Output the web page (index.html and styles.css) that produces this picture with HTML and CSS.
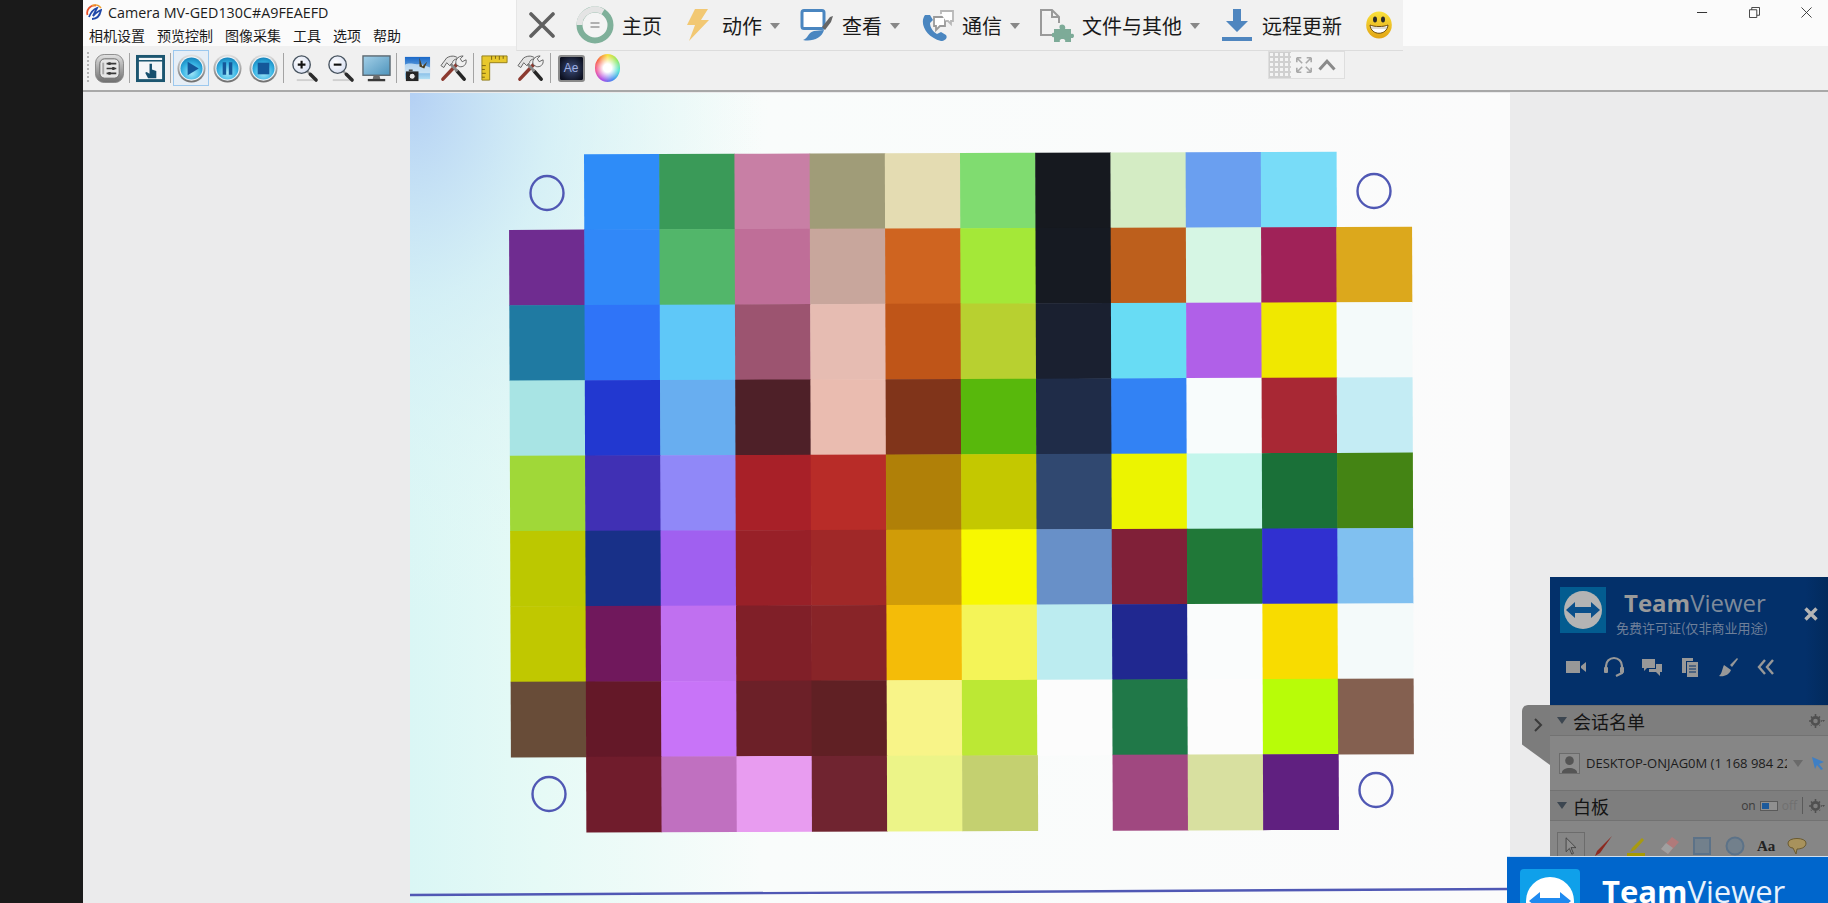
FILE: index.html
```html
<!DOCTYPE html>
<html lang="zh-CN">

<head>
    <meta charset="UTF-8">
    <title>Camera MV-GED130C#A9FEAEFD</title>
    <link rel="stylesheet" href="styles.css">
</head>

<body>
    <svg class="defs" width="0" height="0">
        <defs>
            <linearGradient id="metal" x1="0" y1="0" x2="0" y2="1">
                <stop offset="0" stop-color="#e2e2e2" />
                <stop offset="1" stop-color="#6e6e6e" />
            </linearGradient>
            <radialGradient id="aqua" cx="0.5" cy="0.7" r="0.7">
                <stop offset="0" stop-color="#a4e8f8" />
                <stop offset="0.6" stop-color="#38b4e4" />
                <stop offset="1" stop-color="#1484bc" />
            </radialGradient>
            <radialGradient id="lens" cx="0.4" cy="0.4" r="0.7">
                <stop offset="0" stop-color="#ffffff" />
                <stop offset="1" stop-color="#d4dcf0" />
            </radialGradient>
            <linearGradient id="screen" x1="0" y1="0" x2="1" y2="1">
                <stop offset="0" stop-color="#a4d0e8" />
                <stop offset="1" stop-color="#4e94bc" />
            </linearGradient>
            <linearGradient id="sky" x1="0" y1="0" x2="0" y2="1">
                <stop offset="0" stop-color="#1a68c8" />
                <stop offset="1" stop-color="#b4e0f4" />
            </linearGradient>
            <radialGradient id="ae-glow" cx="0.5" cy="0.5" r="0.6">
                <stop offset="0" stop-color="#3c4c78" />
                <stop offset="1" stop-color="#0c1020" />
            </radialGradient>
            <linearGradient id="smile-fill" x1="0" y1="0" x2="0" y2="1">
                <stop offset="0" stop-color="#fae23c" />
                <stop offset="1" stop-color="#e2a414" />
            </linearGradient>
            <symbol id="media-ring" viewBox="0 0 30 30">
                <circle cx="15" cy="15" r="14.5" fill="url(#metal)" />
                <circle cx="15" cy="15" r="12.6" fill="#eef4f8" />
                <circle cx="15" cy="15" r="11.4" fill="url(#aqua)" />
            </symbol>
            <symbol id="tools" viewBox="0 0 30 30">
                <path d="M4 26 L20 9" stroke="#8c3a30" stroke-width="3.6" stroke-linecap="round" />
                <path d="M26 26 L19 18" stroke="#262626" stroke-width="3.8" stroke-linecap="round" />
                <path d="M19 18 L10 8" stroke="#8a8a8a" stroke-width="3" />
                <path d="M2 12 L8 4 C13 1 18 2 20 5 C16 5 14 7 14 9 L11 12 L8 9 L5 14 Z" fill="#e4e4e4" stroke="#555" stroke-width="0.9" />
                <path d="M18 11 C16 7 19 2 25 2 L22 5 L24 8 L28 6 C29 11 25 14 21 13 Z" fill="#f0f0f0" stroke="#555" stroke-width="0.9" />
            </symbol>
            <symbol id="magnifier" viewBox="0 0 30 30">
                <path d="M7 27 H25" stroke="#d0d0d0" stroke-width="2" />
                <path d="M17 17 L22 22" stroke="#9a9a9a" stroke-width="2.4" />
                <path d="M21 21 L27 27" stroke="#2c2c2c" stroke-width="3.6" stroke-linecap="round" />
                <circle cx="12" cy="11" r="9" fill="url(#lens)" stroke="#46525e" stroke-width="1.4" />
            </symbol>
            <symbol id="gear-shape" viewBox="0 0 16 16">
                <circle cx="6.5" cy="8" r="3.6" fill="none" stroke="#505050" stroke-width="2.6" />
                <path d="M6.5 1 V15 M0 8 H13 M2 3.5 L11 12.5 M11 3.5 L2 12.5" stroke="#505050" stroke-width="1.6" stroke-dasharray="2 10" />
                <path d="M13 7 H16 L14.5 9 Z" fill="#505050" />
            </symbol>
        </defs>
    </svg>

    <div class="desk-strip"></div>

    <div class="app">
        <div class="title-area">
            <div class="title-row">
                <svg class="app-logo" viewBox="0 0 16 16">
                    <path d="M1.5 11 C0 6 4 1 10 1.5" fill="none" stroke="#e8502a" stroke-width="1.8" />
                    <path d="M6 1.5 C9 0.5 13 1 15 4" fill="none" stroke="#f0a030" stroke-width="1.4" />
                    <path d="M3 13 C5 8 8 5 11 4 L7 12 C9 10 12 7 15 6 C14 11 11 15 6 15" fill="none" stroke="#2048a8" stroke-width="1.8" />
                </svg>
                <span class="app-title">Camera MV-GED130C#A9FEAEFD</span>
                <div class="win-controls">
                    <svg viewBox="0 0 12 12"><path d="M0 6 H11" stroke="#222" /></svg>
                    <svg viewBox="0 0 12 12"><path d="M0.5 3 H8.5 V11.5 H0.5 Z M3 3 V0.5 H11.5 V9 H8.5" fill="none" stroke="#333" /></svg>
                    <svg viewBox="0 0 12 12"><path d="M0.5 0.5 L11.5 11.5 M11.5 0.5 L0.5 11.5" stroke="#333" /></svg>
                </div>
            </div>
            <div class="menu-row">
                <span>相机设置</span>
                <span>预览控制</span>
                <span>图像采集</span>
                <span>工具</span>
                <span>选项</span>
                <span>帮助</span>
            </div>
        </div>

        <div class="toolbar">
            <div class="grip"></div>
            <div class="tool">
                <svg viewBox="0 0 30 30">
                    <rect x="0.5" y="0.5" width="29" height="29" rx="9" fill="url(#metal)" stroke="#8a8a8a" />
                    <rect x="5" y="5" width="20" height="20" rx="5" fill="#e6e6e6" stroke="#6a6a6a" />
                    <path d="M8.5 9 V21" stroke="#a8a8a8" stroke-width="2" />
                    <path d="M12 10 H22 M12 15 H22 M12 20 H22" stroke="#3a3a3a" stroke-width="1.8" />
                    <path d="M15 8.5 V11.5 M19 13.5 V16.5 M15 18.5 V21.5" stroke="#3a3a3a" stroke-width="2.4" />
                </svg>
            </div>
            <div class="sep"></div>
            <div class="tool">
                <svg viewBox="0 0 30 30">
                    <rect x="1.5" y="2.5" width="27" height="25" fill="#f4f6f8" stroke="#1c5670" stroke-width="3" />
                    <path d="M2 7 H28" stroke="#1c5670" stroke-width="1.6" />
                    <path d="M14 10 H16.5 V16 L21 17.5 V25 H12.5 L9.5 19.5 L11 18.5 L14 20.5 Z" fill="#17506e" />
                </svg>
            </div>
            <div class="sep"></div>
            <div class="tool active">
                <svg viewBox="0 0 30 30">
                    <use href="#media-ring" />
                    <path d="M11 8 L22.5 15 L11 22 Z" fill="#14589a" />
                </svg>
            </div>
            <div class="tool">
                <svg viewBox="0 0 30 30">
                    <use href="#media-ring" />
                    <path d="M10 8.5 H13.6 V21.5 H10 Z M16.4 8.5 H20 V21.5 H16.4 Z" fill="#14589a" />
                </svg>
            </div>
            <div class="tool">
                <svg viewBox="0 0 30 30">
                    <use href="#media-ring" />
                    <rect x="9" y="9" width="12" height="12" fill="#14589a" />
                </svg>
            </div>
            <div class="sep"></div>
            <div class="tool">
                <svg viewBox="0 0 30 30">
                    <use href="#magnifier" />
                    <path d="M8 11 H16 M12 7 V15" stroke="#111" stroke-width="2.2" />
                </svg>
            </div>
            <div class="tool">
                <svg viewBox="0 0 30 30">
                    <use href="#magnifier" />
                    <path d="M8 11 H16" stroke="#111" stroke-width="2.2" />
                </svg>
            </div>
            <div class="tool">
                <svg viewBox="0 0 30 30">
                    <rect x="1" y="2" width="28" height="20" fill="url(#screen)" stroke="#5a666e" stroke-width="1.4" />
                    <path d="M12 22 H18 L19 26 H11 Z" fill="#6c6c6c" />
                    <path d="M6 27 H24" stroke="#3a3a3a" stroke-width="2.4" />
                </svg>
            </div>
            <div class="sep"></div>
            <div class="tool">
                <svg viewBox="0 0 30 30">
                    <rect x="2" y="3" width="26" height="23" fill="url(#sky)" />
                    <path d="M2 11 C8 8 12 12 18 10 L28 14 V20 H2 Z" fill="#e4f2fa" opacity="0.7" />
                    <path d="M17 4 L20 13 L25 8 L22 15 L17 13 Z" fill="#4a3c20" />
                    <rect x="3" y="18" width="13" height="10" fill="#262626" />
                    <rect x="6" y="16" width="4" height="2" fill="#444" />
                    <circle cx="9.5" cy="23" r="3.2" fill="#e8e8e8" stroke="#111" />
                </svg>
            </div>
            <div class="tool"><svg viewBox="0 0 30 30"><use href="#tools" /></svg></div>
            <div class="sep"></div>
            <div class="tool">
                <svg viewBox="0 0 30 30">
                    <path d="M2 2 H28 V9 H10 V27 H2 Z" fill="#e8c82c" stroke="#94801c" />
                    <path d="M12 2 V6 M16 2 V5 M20 2 V6 M24 2 V5 M2 12 H6 M2 16 H5 M2 20 H6 M2 24 H5" stroke="#7a6410" />
                </svg>
            </div>
            <div class="tool"><svg viewBox="0 0 30 30"><use href="#tools" /></svg></div>
            <div class="sep"></div>
            <div class="tool">
                <div class="ae-badge">
                    <svg viewBox="0 0 26 26"><rect width="26" height="26" fill="url(#ae-glow)" /></svg>
                    <span>Ae</span>
                </div>
            </div>
            <div class="tool">
                <div class="color-wheel"></div>
            </div>
        </div>

        <div class="canvas">
            <svg class="photo" viewBox="0 0 1100 811">
                <defs>
                    <linearGradient id="paper" x1="0" y1="0" x2="1" y2="0">
                        <stop offset="0" stop-color="#daf6f5" />
                        <stop offset="0.12" stop-color="#e6faf6" />
                        <stop offset="0.32" stop-color="#f9fcfb" />
                        <stop offset="1" stop-color="#fbfbfb" />
                    </linearGradient>
                    <radialGradient id="corner" gradientUnits="userSpaceOnUse" cx="0" cy="0" r="1" gradientTransform="scale(360 520)">
                        <stop offset="0" stop-color="#b4d0f4" />
                        <stop offset="0.4" stop-color="#d0ecf6" stop-opacity="0.7" />
                        <stop offset="1" stop-color="#e6faf6" stop-opacity="0" />
                    </radialGradient>
                </defs>
                <rect width="1100" height="811" fill="url(#paper)" />
                <rect width="1100" height="811" fill="url(#corner)" />

                <g transform="translate(1 -1) rotate(-0.2 550 405)">
                    <g class="row" transform="translate(0 61)">
                        <rect x="174.2" fill="#2e8cf8" /><rect x="249.4" fill="#3a9a58" /><rect x="324.6" fill="#c87fa5" /><rect x="399.8" fill="#a09c78" /><rect x="475" fill="#e4dcb2" /><rect x="550.2" fill="#80dc70" /><rect x="625.4" fill="#16191f" /><rect x="700.6" fill="#d4ecc4" /><rect x="775.8" fill="#6a9ff0" /><rect x="851" fill="#78dcf8" />
                    </g>
                    <g class="row" transform="translate(0 136.3)">
                        <rect x="99" fill="#6f2c90" /><rect x="174.2" fill="#3188f8" /><rect x="249.4" fill="#52b66a" /><rect x="324.6" fill="#bf6e98" /><rect x="399.8" fill="#c8a69c" /><rect x="475" fill="#cf6420" /><rect x="550.2" fill="#a4e838" /><rect x="625.4" fill="#161a22" /><rect x="700.6" fill="#bd5f1c" /><rect x="775.8" fill="#d6f6e4" /><rect x="851" fill="#a02258" /><rect x="926.2" fill="#dca81c" />
                    </g>
                    <g class="row" transform="translate(0 211.6)">
                        <rect x="99" fill="#1f7aa2" /><rect x="174.2" fill="#2f74f8" /><rect x="249.4" fill="#5fc8f8" /><rect x="324.6" fill="#9c5470" /><rect x="399.8" fill="#e6bcb2" /><rect x="475" fill="#bf5518" /><rect x="550.2" fill="#b8d030" /><rect x="625.4" fill="#1a2030" /><rect x="700.6" fill="#68dcf4" /><rect x="775.8" fill="#b060e8" /><rect x="851" fill="#f0e800" /><rect x="926.2" fill="#f4fafa" />
                    </g>
                    <g class="row" transform="translate(0 286.9)">
                        <rect x="99" fill="#a8e4e4" /><rect x="174.2" fill="#2238d0" /><rect x="249.4" fill="#68aef0" /><rect x="324.6" fill="#4e2028" /><rect x="399.8" fill="#eabcb0" /><rect x="475" fill="#80341a" /><rect x="550.2" fill="#58b80c" /><rect x="625.4" fill="#1f2c48" /><rect x="700.6" fill="#3282f4" /><rect x="775.8" fill="#f8fcfc" /><rect x="851" fill="#a82834" /><rect x="926.2" fill="#c4ecf4" />
                    </g>
                    <g class="row" transform="translate(0 362.2)">
                        <rect x="99" fill="#a0d838" /><rect x="174.2" fill="#4030b4" /><rect x="249.4" fill="#9088f8" /><rect x="324.6" fill="#a82028" /><rect x="399.8" fill="#b82c28" /><rect x="475" fill="#b08008" /><rect x="550.2" fill="#c4c800" /><rect x="625.4" fill="#304870" /><rect x="700.6" fill="#ecf400" /><rect x="775.8" fill="#c4f6ec" /><rect x="851" fill="#1a7038" /><rect x="926.2" fill="#448414" />
                    </g>
                    <g class="row" transform="translate(0 437.5)">
                        <rect x="99" fill="#bcc800" /><rect x="174.2" fill="#183088" /><rect x="249.4" fill="#a060f0" /><rect x="324.6" fill="#982028" /><rect x="399.8" fill="#a02828" /><rect x="475" fill="#d09c08" /><rect x="550.2" fill="#f8f800" /><rect x="625.4" fill="#6890c8" /><rect x="700.6" fill="#802038" /><rect x="775.8" fill="#207838" /><rect x="851" fill="#3030d0" /><rect x="926.2" fill="#80c0f0" />
                    </g>
                    <g class="row" transform="translate(0 512.8)">
                        <rect x="99" fill="#c0c800" /><rect x="174.2" fill="#70185c" /><rect x="249.4" fill="#c070f0" /><rect x="324.6" fill="#801f28" /><rect x="399.8" fill="#882428" /><rect x="475" fill="#f4bc08" /><rect x="550.2" fill="#f4f458" /><rect x="625.4" fill="#bcecf0" /><rect x="700.6" fill="#202890" /><rect x="775.8" fill="#fafcfc" /><rect x="851" fill="#f8dc00" /><rect x="926.2" fill="#f4fafa" />
                    </g>
                    <g class="row" transform="translate(0 588.1)">
                        <rect x="99" fill="#684c38" /><rect x="174.2" fill="#641828" /><rect x="249.4" fill="#c874f8" /><rect x="324.6" fill="#6c2028" /><rect x="399.8" fill="#602024" /><rect x="475" fill="#f8f488" /><rect x="550.2" fill="#bce834" /><rect x="625.4" fill="#fcfcfc" /><rect x="700.6" fill="#207848" /><rect x="775.8" fill="#fcfcfc" /><rect x="851" fill="#b8fc08" /><rect x="926.2" fill="#846050" />
                    </g>
                    <g class="row" transform="translate(0 663.4)">
                        <rect x="174.2" fill="#701c2c" /><rect x="249.4" fill="#c070c0" /><rect x="324.6" fill="#e89cf0" /><rect x="399.8" fill="#702430" /><rect x="475" fill="#ecf488" /><rect x="550.2" fill="#c4d070" /><rect x="700.6" fill="#a04880" /><rect x="775.8" fill="#d8e0a0" /><rect x="851" fill="#602080" />
                    </g>
                </g>

                <g class="marks">
                    <ellipse cx="137" cy="100" rx="16.5" ry="17" />
                    <ellipse cx="964" cy="98" rx="16.5" ry="17" />
                    <ellipse cx="139" cy="701" rx="16.5" ry="17" />
                    <ellipse cx="966" cy="697" rx="16.5" ry="17" />
                    <path d="M0 802 L1100 796" />
                </g>
            </svg>
        </div>
    </div>

    <div class="remote-bar">
        <svg class="rb-close" viewBox="0 0 26 26"><path d="M2 2 L24 24 M24 2 L2 24" stroke="#606060" stroke-width="3.6" stroke-linecap="round" /></svg>
        <svg class="rb-home" viewBox="0 0 38 38">
            <circle cx="19" cy="19" r="15.5" fill="#f4f4f4" stroke="#7fb09a" stroke-width="6" />
            <path d="M3.5 19 A15.5 15.5 0 0 1 27 5.7" fill="none" stroke="#e4e4e4" stroke-width="6" />
            <path d="M14.5 17 H23.5 M14.5 21 H23.5" stroke="#b0b0b0" stroke-width="1.8" />
        </svg>
        <span class="rb-label rb-home-label">主页</span>

        <svg class="rb-icon" viewBox="0 0 34 34"><path d="M15 1 H28 L21 12 H29 L9 33 L15 17 H7 Z" fill="#f2c873" /></svg>
        <span class="rb-label">动作</span><i class="caret"></i>

        <svg class="rb-icon" viewBox="0 0 34 34">
            <rect x="2" y="2.5" width="22" height="18" rx="2" fill="#fff" stroke="#4a86c0" stroke-width="3" />
            <path d="M3 32 C8 31 8 24 14 23 L24 22 C22 30 12 34 3 32 Z" fill="#4a86c0" />
            <path d="M22 19 L30 9 L33 8 L31 14 L25 22 Z" fill="#666" />
        </svg>
        <span class="rb-label">查看</span><i class="caret"></i>

        <svg class="rb-icon" viewBox="0 0 34 34">
            <path d="M5 7 C-1 15 6 29 21 33 C25 33 28 30 26 27 L21 24 L17 26 C13 24 10 19 10 15 L13 12 L10 7 Z" fill="#4a86c0" />
            <path d="M14 9 H25 V18 H20 L16 22 V18 H14 Z" fill="#fff" stroke="#9a9a9a" stroke-width="1.8" />
            <path d="M21 6 V3 H33 V13 H31 V16 L28 13 H26" fill="#fff" stroke="#b8b8b8" stroke-width="1.8" />
        </svg>
        <span class="rb-label">通信</span><i class="caret"></i>

        <svg class="rb-icon" viewBox="0 0 34 34">
            <path d="M1 2 H12 L19 9 V15 M12 27 H1 Z" fill="#f4f4f4" stroke="#9a9a9a" stroke-width="2" />
            <path d="M1 1 V28 M12 2 V9 H19" fill="none" stroke="#9a9a9a" stroke-width="2" />
            <path d="M14 21 H20 C17 15 27 15 25 21 H31 V26 C35 24 35 31 31 30 V34 H25 C27 30 18 30 20 34 H14 V29 C11 31 11 23 14 25 Z" fill="#7dab98" />
        </svg>
        <span class="rb-label">文件与其他</span><i class="caret"></i>

        <svg class="rb-icon" viewBox="0 0 34 34">
            <path d="M13 1 H21 V13 H28 L17 24 L6 13 H13 Z" fill="#4f86bf" />
            <path d="M2 29 H32 V33 H2 Z" fill="#4f86bf" />
        </svg>
        <span class="rb-label">远程更新</span>

        <svg class="rb-smile" viewBox="0 0 26 28">
            <ellipse cx="13" cy="14" rx="12.8" ry="13.5" fill="url(#smile-fill)" />
            <ellipse cx="9" cy="8.5" rx="2" ry="3" fill="#2a2a2a" />
            <ellipse cx="17" cy="8.5" rx="2" ry="3" fill="#2a2a2a" />
            <path d="M4 14 C8 16 18 16 22 14 C21 25 5 25 4 14 Z" fill="#fff" stroke="#6a4a10" />
            <path d="M5 17 H21" stroke="#b0a890" stroke-width="0.8" />
        </svg>
    </div>

    <div class="rb-tab">
        <div class="dots"></div>
        <svg viewBox="0 0 20 20"><path d="M2 2 H7 M2 2 V7 M18 2 H13 M18 2 V7 M2 18 H7 M2 18 V13 M18 18 H13 M18 18 V13 M3 3 L8 8 M17 3 L12 8 M3 17 L8 12 M17 17 L12 12" stroke="#aaa" stroke-width="1.8" /></svg>
        <svg viewBox="0 0 24 20"><path d="M2 16 L12 5 L22 16" fill="none" stroke="#8a8a8a" stroke-width="4" /></svg>
    </div>

    <div class="tv-handle">
        <svg viewBox="0 0 10 14"><path d="M2 1 L8 7 L2 13" fill="none" stroke="#3a3a3a" stroke-width="2" /></svg>
    </div>

    <div class="tv-panel">
        <div class="tv-head">
            <div class="tv-brand">
                <div class="tv-logo">
                    <svg viewBox="0 0 46 46">
                        <circle cx="23" cy="23" r="19" fill="#b4b4b4" />
                        <path d="M6 23 L15 15 V20 H31 V15 L40 23 L31 31 V26 H15 V31 Z" fill="#0a4f8a" />
                    </svg>
                </div>
                <div class="tv-names">
                    <div class="tv-name"><b>Team</b>Viewer</div>
                    <div class="tv-lic">免费许可证(仅非商业用途)</div>
                </div>
                <svg class="tv-close" viewBox="0 0 14 14"><path d="M1.5 1.5 L12.5 12.5 M12.5 1.5 L1.5 12.5" stroke="#b4b4b4" stroke-width="3.4" /></svg>
            </div>
            <div class="tv-actions">
                <svg viewBox="0 0 22 22"><path d="M1 5 H15 V17 H1 Z M16 10 L21 6 V16 L16 12 Z" fill="#989898" /></svg>
                <svg viewBox="0 0 22 22"><path d="M3 14 V10 A8 8 0 0 1 19 10 V14 M19 14 V17 L13 20" fill="none" stroke="#989898" stroke-width="2.2" /><rect x="1" y="11" width="4" height="6" rx="1" fill="#989898" /><rect x="17" y="11" width="4" height="6" rx="1" fill="#989898" /></svg>
                <svg viewBox="0 0 22 22"><path d="M1 3 H14 V12 H6 L3 15 V12 H1 Z" fill="#989898" /><path d="M8 13 H15 V8 H21 V16 H19 V20 L15 16 H8 Z" fill="#989898" /></svg>
                <svg viewBox="0 0 22 22"><path d="M3 2 H14 V5 H7 V17 H3 Z" fill="#989898" /><path d="M8 6 H19 V21 H8 Z" fill="#989898" /><path d="M10 10 H17 M10 13 H17 M10 16 H17" stroke="#03306a" /></svg>
                <svg viewBox="0 0 22 22"><path d="M13 9 L20 2 L21 3 L15 11 Z" fill="#989898" /><path d="M7 9 L14 14 C12 19 7 21 2 20 C5 18 5 13 7 9 Z" fill="#989898" /></svg>
                <svg viewBox="0 0 22 22"><path d="M10 4 L4 11 L10 18 M18 4 L12 11 L18 18" fill="none" stroke="#989898" stroke-width="2.4" /></svg>
            </div>
        </div>

        <div class="tv-section">
            <i class="tri"></i><span class="tv-sec-name">会话名单</span>
            <svg class="gear gear-end" viewBox="0 0 16 16"><use href="#gear-shape" /></svg>
        </div>
        <div class="tv-row">
            <svg class="avatar" viewBox="0 0 22 22">
                <rect x="0.5" y="0.5" width="21" height="21" fill="#8c8c8c" stroke="#6a6a6a" />
                <circle cx="11" cy="8" r="4.5" fill="#555" />
                <path d="M3 21 C3 14 19 14 19 21 Z" fill="#555" />
            </svg>
            <span class="tv-device">DESKTOP-ONJAG0M (1 168 984 224)</span>
            <i class="tri tri-row"></i>
            <svg class="tv-cursor" viewBox="0 0 14 14"><path d="M1 1 L13 6 L8 8 L12 13 L10 14 L6 9 L4 13 Z" fill="#3f7fc4" /></svg>
        </div>
        <div class="tv-section">
            <i class="tri"></i><span class="tv-sec-name">白板</span>
            <span class="tv-on">on</span><i class="toggle"><i></i></i><span class="tv-off">off</span>
            <svg class="gear" viewBox="0 0 16 16"><use href="#gear-shape" /></svg>
        </div>
        <div class="tv-whiteboard">
            <span class="wb-cell">
                <svg viewBox="0 0 22 22"><path d="M5 1 L17 13 H11 L14 20 L12 21 L9 14 L5 18 Z" fill="#8e8e8e" stroke="#3a3a3a" /></svg>
            </span>
            <svg viewBox="0 0 22 22"><path d="M20 1 L5 16 L3 21 L8 18 Z" fill="#8c2a20" /></svg>
            <svg viewBox="0 0 22 22"><path d="M17 3 L7 13 L5 17 L10 15 L19 5 Z" fill="#a89a10" /><path d="M2 18 H20 V22 H2 Z" fill="#a89a00" /></svg>
            <svg viewBox="0 0 22 22"><path d="M14 2 L21 7 L10 19 L3 14 Z" fill="#b07a7a" /><path d="M3 14 L8 8 L15 13 L10 19 Z" fill="#a0a0a0" /></svg>
            <svg viewBox="0 0 22 22"><rect x="3" y="3" width="16" height="16" fill="#72808c" stroke="#5c7288" stroke-width="2" /></svg>
            <svg viewBox="0 0 22 22"><circle cx="11" cy="11" r="8.5" fill="#72808c" stroke="#5c7288" stroke-width="2" /></svg>
            <span class="wb-text">Aa</span>
            <svg viewBox="0 0 22 22"><path d="M2 8 C2 2 20 2 20 8 C20 13 14 14 11 14 L10 19 L7 13 C4 13 2 11 2 8 Z" fill="#a8925c" stroke="#6a5a30" /></svg>
        </div>
    </div>

    <div class="tv-banner">
        <div class="tvb-logo">
            <svg viewBox="0 0 60 60">
                <circle cx="30" cy="32" r="24" fill="#fff" />
                <path d="M9 32 L20 23 V29 H40 V23 L51 32 L40 41 V35 H20 V41 Z" fill="#1f8af0" />
            </svg>
        </div>
        <div class="tvb-name"><b>Team</b>Viewer</div>
    </div>
</body>

</html>
```

FILE: styles.css
```css
html,
body {
    margin: 0;
    height: 100%;
}

body {
    display: flex;
    position: relative;
    height: 903px;
    overflow: hidden;
    font-family: "Noto Sans", "Noto Sans CJK SC", sans-serif;
    color: #222;
    background: #ebebec;
}

.defs {
    position: absolute;
}

.desk-strip {
    width: 83px;
    flex: none;
    background: #1a1a1a;
}

.app {
    flex: 1;
    display: flex;
    flex-direction: column;
    min-width: 0;
}

/* title + menu */
.title-area {
    height: 46px;
    background: #fbfbfb;
    flex: none;
}

.title-row {
    height: 24px;
    display: flex;
    align-items: center;
    padding-left: 3px;
}

.app-logo {
    width: 16px;
    height: 16px;
    margin-right: 6px;
}

.app-title {
    font-family: "Open Sans", "Noto Sans", sans-serif;
    font-size: 14.3px;
    white-space: nowrap;
    color: #1c1c1c;
}

.win-controls {
    margin-left: auto;
    display: flex;
    align-items: center;
    gap: 41px;
    padding-right: 16px;
}

.win-controls svg {
    width: 11px;
    height: 11px;
}

.menu-row {
    display: flex;
    height: 22px;
    align-items: center;
    padding-left: 6px;
    font-family: "Noto Sans CJK SC", sans-serif;
    font-size: 14px;
    line-height: 22px;
    color: #1a1a1a;
}

.menu-row span {
    margin-right: 12px;
}

/* toolbar */
.toolbar {
    height: 44px;
    flex: none;
    display: flex;
    align-items: center;
    padding-left: 4px;
    background: #f0f0f0;
    border-bottom: 2px solid #a8a8a8;
}

.grip {
    width: 2px;
    height: 32px;
    margin-right: 2px;
    background-image: linear-gradient(#b4b4b4 50%, transparent 50%);
    background-size: 2px 4px;
}

.tool {
    width: 36px;
    height: 36px;
    box-sizing: border-box;
    display: flex;
    align-items: center;
    justify-content: center;
}

.tool svg {
    width: 29px;
    height: 29px;
}

.tool.active {
    background: #e6eef6;
    border: 1px solid #9cc8ee;
}

.sep {
    width: 1px;
    height: 30px;
    margin: 0 2px;
    background: #a4a4a4;
}

.ae-badge {
    position: relative;
    width: 27px;
    height: 27px;
    border-radius: 3px;
    overflow: hidden;
    border: 2px solid #8a8a8a;
    box-sizing: border-box;
    display: flex;
    align-items: center;
    justify-content: center;
}

.ae-badge svg {
    position: absolute;
    left: 0;
    top: 0;
    width: 100%;
    height: 100%;
}

.ae-badge span {
    position: relative;
    font-family: "Liberation Sans", sans-serif;
    font-size: 12px;
    color: #9eb0e4;
}

.color-wheel {
    width: 25px;
    height: 28px;
    border-radius: 50%;
    background:
        radial-gradient(circle, #fff 0 22%, rgba(255, 255, 255, 0) 68%),
        conic-gradient(#f8e040, #8ce860, #40e0d0, #4890f0, #b050e8, #f04890, #f86040, #f8e040);
}

/* picture */
.canvas {
    flex: 1;
    padding: 1px 0 0 327px;
    min-height: 0;
    background: #ebebec;
}

.photo {
    display: block;
    width: 1100px;
    height: 811px;
}

.row rect {
    width: 75.8px;
    height: 75.8px;
}

.marks {
    fill: none;
    stroke: #5058b4;
    stroke-width: 2.4;
}

/* remote control bar on top of the window */
.remote-bar {
    position: absolute;
    left: 516px;
    top: 0;
    width: 887px;
    height: 51px;
    box-sizing: border-box;
    display: flex;
    align-items: center;
    padding-left: 12px;
    background: #f1f1f1;
    border-bottom: 1px solid #dcdcdc;
    border-left: 1px solid #e6e6e6;
    font-family: "Noto Sans CJK SC", sans-serif;
    font-size: 20px;
    color: #1a1a1a;
}

.rb-close {
    width: 26px;
    height: 26px;
    margin-right: 21px;
}

.rb-home {
    width: 38px;
    height: 38px;
    margin-right: 8px;
}

.rb-label {
    white-space: nowrap;
}

.rb-home-label {
    margin-right: 18px;
}

.rb-icon {
    width: 34px;
    height: 34px;
    margin-right: 8px;
}

.caret {
    width: 0;
    height: 0;
    margin: 2px 20px 0 8px;
    border-left: 5px solid transparent;
    border-right: 5px solid transparent;
    border-top: 6px solid #888;
}

.rb-smile {
    width: 26px;
    height: 28px;
    margin-left: 24px;
}

.rb-tab {
    position: absolute;
    left: 1268px;
    top: 51px;
    width: 77px;
    height: 28px;
    display: flex;
    align-items: center;
    background: #f3f3f3;
    border: 1px solid #dedede;
    box-sizing: border-box;
}

.dots {
    width: 22px;
    height: 100%;
    margin-right: 4px;
    background-color: #d0d0d0;
    background-image: radial-gradient(#f4f4f4 0 1.6px, transparent 2px);
    background-size: 5px 5px;
}

.rb-tab svg {
    width: 18px;
    height: 18px;
    margin-right: 5px;
}

/* dimmed teamviewer panel */
.tv-handle {
    position: absolute;
    left: 1522px;
    top: 705px;
    width: 28px;
    height: 60px;
    background: #7c7c7c;
    border-radius: 6px 0 0 0;
    clip-path: polygon(0 0, 100% 0, 100% 100%, 0 66%);
    box-sizing: border-box;
    padding: 13px 0 0 11px;
}

.tv-handle svg {
    display: block;
    width: 10px;
    height: 14px;
}

.tv-panel {
    position: absolute;
    left: 1550px;
    top: 577px;
    width: 278px;
    height: 280px;
    overflow: hidden;
    background: #868686;
    font-family: "Noto Sans CJK SC", sans-serif;
}

.tv-head {
    height: 128px;
    background: linear-gradient(to right, #03306a 92%, #022a5c);
    box-sizing: border-box;
    padding: 10px 0 0 10px;
}

.tv-brand {
    display: flex;
    height: 46px;
}

.tv-logo {
    width: 46px;
    height: 46px;
    background: #035c90;
    flex: none;
}

.tv-logo svg {
    display: block;
}

.tv-names {
    margin-left: 10px;
}

.tv-name {
    font-family: "Open Sans", sans-serif;
    font-size: 24px;
    line-height: 32px;
    margin-left: 8px;
    color: #7e8a9a;
}

.tv-name b {
    color: #9a9a9a;
    font-weight: 700;
}

.tv-lic {
    font-size: 13px;
    line-height: 18px;
    color: #6e7f99;
    white-space: nowrap;
}

.tv-close {
    width: 14px;
    height: 14px;
    margin: 20px 10px 0 auto;
}

.tv-actions {
    display: flex;
    gap: 16px;
    margin-top: 23px;
    padding-left: 5px;
}

.tv-actions svg {
    width: 22px;
    height: 22px;
}

.tv-section {
    height: 31px;
    display: flex;
    align-items: center;
    padding-left: 7px;
    background: #7e7e7e;
    border-top: 1px solid #727272;
    border-bottom: 1px solid #727272;
    box-sizing: border-box;
    color: #141414;
}

.tv-sec-name {
    font-size: 18px;
    margin-left: 6px;
}

.tri {
    width: 0;
    height: 0;
    border-left: 5px solid transparent;
    border-right: 5px solid transparent;
    border-top: 7px solid #3c4650;
}

.gear {
    width: 16px;
    height: 16px;
    margin-right: 3px;
}

.gear-end {
    margin-left: auto;
}

.tv-on,
.tv-off {
    font-family: "Open Sans", sans-serif;
    font-size: 12px;
    color: #3c3c3c;
}

.tv-on {
    margin-left: auto;
}

.tv-off {
    color: #707070;
    padding-right: 5px;
    margin-right: 6px;
    border-right: 1px solid #5a5a5a;
}

.toggle {
    width: 18px;
    height: 10px;
    margin: 0 4px;
    border: 1px solid #5a5a5a;
    background: #909090;
    display: block;
    box-sizing: border-box;
    padding: 1px;
}

.toggle i {
    display: block;
    width: 7px;
    height: 6px;
    background: #1c5a9c;
}

.tv-row {
    height: 54px;
    display: flex;
    align-items: center;
    padding-left: 9px;
    background: #868686;
}

.avatar {
    width: 21px;
    height: 21px;
    flex: none;
}

.tv-device {
    width: 201px;
    margin-left: 6px;
    flex: none;
    overflow: hidden;
    white-space: nowrap;
    font-family: "Open Sans", sans-serif;
    font-size: 13px;
    color: #1c1c1c;
}

.tri-row {
    margin-left: 6px;
    border-top-color: #6a6a6a;
}

.tv-cursor {
    width: 14px;
    height: 14px;
    margin-left: 8px;
}

.tv-whiteboard {
    display: flex;
    align-items: center;
    gap: 11px;
    padding: 11px 0 0 7px;
}

.tv-whiteboard svg {
    width: 22px;
    height: 22px;
    flex: none;
}

.wb-cell {
    width: 28px;
    height: 28px;
    margin-right: -4px;
    box-sizing: border-box;
    border: 1px solid #6c6c6c;
    display: flex;
    align-items: center;
    justify-content: center;
}

.wb-cell svg {
    width: 18px;
    height: 18px;
}

.wb-text {
    font-family: "Liberation Serif", serif;
    font-weight: 700;
    font-size: 15px;
    color: #222;
}

/* bright banner */
.tv-banner {
    position: absolute;
    left: 1507px;
    top: 856px;
    width: 321px;
    height: 47px;
    box-sizing: border-box;
    overflow: hidden;
    display: flex;
    padding: 12px 0 0 13px;
    background: #0066cc;
    border-top: 1px solid #cfe0f2;
}

.tvb-logo {
    width: 60px;
    height: 60px;
    flex: none;
    border-radius: 4px;
    background: #0fa0ea;
}

.tvb-logo svg {
    display: block;
}

.tvb-name {
    font-family: "Open Sans", sans-serif;
    font-size: 31px;
    line-height: 40px;
    margin: 2px 0 0 22px;
    color: #e8f2fc;
}

.tvb-name b {
    font-weight: 700;
    color: #fff;
}
```
